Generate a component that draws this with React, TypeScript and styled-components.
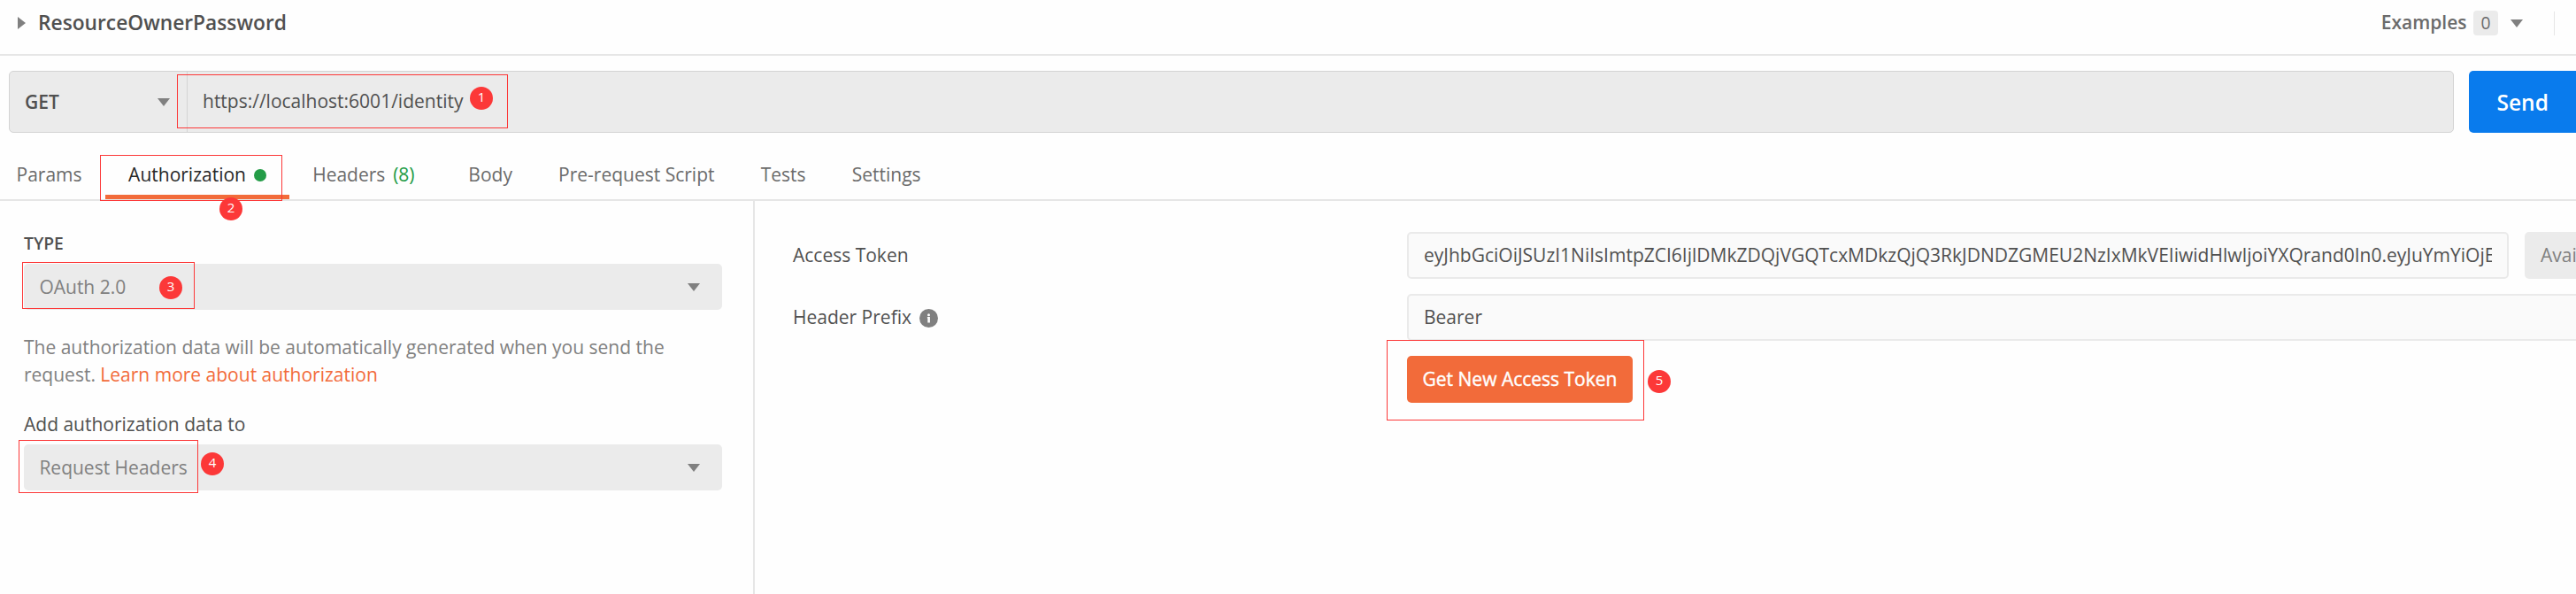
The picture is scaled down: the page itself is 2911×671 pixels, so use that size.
import React from "react";
import styled, { createGlobalStyle, css } from "styled-components";

const color = {
  page: "#fefefe",
  line: "#e6e6e6",
  field: "#ebebeb",
  input: "#fafafa",
  strong: "#505050",
  text: "#6b6b6b",
  muted: "#808080",
  orange: "#f26b3a",
  blue: "#097bed",
  green: "#249c47",
  mark: "#fc3838",
};

const GlobalStyle = createGlobalStyle`
  * { box-sizing: border-box; }
  body {
    margin: 0;
    background: ${color.page};
    font-family: "Open Sans", "Noto Sans", sans-serif;
    font-size: 21px;
    color: ${color.text};
    overflow: hidden;
  }
`;

const Page = styled.div`
  position: relative;
  display: flex;
  flex-direction: column;
  height: 671px;
  overflow: hidden;
`;

const Caret = styled.span<{ $dir?: "right" }>`
  flex: none;
  width: 0;
  height: 0;
  ${({ $dir }) =>
    $dir === "right"
      ? css`
          border-left: 9px solid ${color.muted};
          border-top: 7px solid transparent;
          border-bottom: 7px solid transparent;
        `
      : css`
          border-top: 9px solid ${color.muted};
          border-left: 7px solid transparent;
          border-right: 7px solid transparent;
        `}
`;

const TitleBar = styled.header`
  display: flex;
  align-items: center;
  flex: none;
  height: 63px;
  padding: 0 24px 9px 20px;
  border-bottom: 2px solid ${color.line};
`;

const Title = styled.h1`
  margin: 0 auto 0 14px;
  font-size: 22.75px;
  line-height: 30px;
  font-weight: 600;
  color: ${color.strong};
`;

const Examples = styled.div`
  display: flex;
  align-items: center;
  height: 27px;
  padding-right: 35px;
  border-right: 1px solid ${color.line};
  font-weight: 600;
`;

const ExamplesLabel = styled.span`
  padding-bottom: 2px;
`;

const Count = styled.span`
  width: 28px;
  height: 28px;
  margin: 0 14px 0 7.5px;
  border-radius: 4px;
  background: ${color.field};
  font-size: 19.25px;
  font-weight: 400;
  line-height: 28px;
  text-align: center;
`;

const RequestRow = styled.div`
  display: flex;
  flex: none;
  gap: 17px;
  height: 70px;
  margin: 17px 0 0 10px;
`;

const UrlBar = styled.div`
  display: flex;
  flex: none;
  width: 2763px;
  border: 1px solid #d4d4d4;
  border-radius: 5px;
  background: ${color.field};
  color: ${color.strong};
`;

const Method = styled.div`
  display: flex;
  align-items: center;
  justify-content: space-between;
  width: 201px;
  padding: 0 19px 0 17px;
  border-right: 1px solid #d4d4d4;
  font-weight: 600;
`;

const Url = styled.div`
  padding-left: 17px;
  line-height: 67px;
`;

const SendButton = styled.button`
  flex: none;
  width: 160px;
  padding: 0 0 0 31.5px;
  border: 0;
  border-radius: 5px;
  background: ${color.blue};
  color: #fff;
  font: 600 24.5px "Open Sans", sans-serif;
  text-align: left;
`;

const Tabs = styled.nav`
  display: flex;
  align-items: flex-end;
  flex: none;
  height: 77px;
  border-bottom: 2px solid ${color.line};
`;

const Tab = styled.div<{ $active?: boolean }>`
  display: flex;
  align-items: center;
  height: 56px;
  padding: 0 26.1px;
  color: ${({ $active }) => ($active ? "#282828" : color.text)};
  box-shadow: ${({ $active }) => ($active ? `inset 0 -5px ${color.orange}` : "none")};

  &:first-child {
    padding: 0 26.5px 0 18.5px;
  }
`;

const Dot = styled.span`
  width: 14px;
  height: 14px;
  margin: 2px 0 0 9px;
  border-radius: 50%;
  background: ${color.green};
`;

const HeaderCount = styled.span`
  margin: 0 8.6px 0 8.8px;
  color: ${color.green};
`;

const Panels = styled.main`
  display: flex;
  flex: 1;
`;

const TypePanel = styled.section`
  flex: none;
  width: 853px;
  padding: 32px 35px 0 27px;
  border-right: 2px solid ${color.line};
`;

const FieldLabel = styled.div<{ $caps?: boolean }>`
  margin-bottom: ${({ $caps }) => ($caps ? 8 : 7)}px;
  font-size: ${({ $caps }) => ($caps ? "19.25px" : "21px")};
  font-weight: ${({ $caps }) => ($caps ? 600 : 400)};
  line-height: 31px;
  color: ${color.strong};
`;

const Select = styled.div`
  display: flex;
  align-items: center;
  justify-content: space-between;
  height: 52px;
  padding: 0 25px 0 17.4px;
  border-radius: 5px;
  background: ${color.field};
  color: ${color.muted};
`;

const Hint = styled.p`
  margin: 27px 0 25px;
  line-height: 31px;
  color: ${color.muted};
`;

const HintLink = styled.a`
  color: ${color.orange};
`;

const TokenPanel = styled.section`
  display: flex;
  flex: none;
  flex-direction: column;
  gap: 17px;
  width: 2200px;
  padding: 35px 0 0 43px;
`;

const FormRow = styled.div`
  display: flex;
  height: 53px;
`;

const FormLabel = styled.div`
  display: flex;
  align-items: center;
  flex: none;
  width: 694px;
  padding-bottom: 1px;
  color: ${color.strong};
`;

const InfoIcon = styled.svg`
  margin: 2px 0 0 9px;
`;

const Input = styled.div<{ $width: number }>`
  flex: none;
  width: ${({ $width }) => $width}px;
  padding: 0 17px;
  border: 2px solid #eaeaea;
  border-radius: 5px;
  background: ${color.input};
  color: ${color.strong};
  line-height: 48px;
`;

const InputValue = styled.div`
  overflow: hidden;
  white-space: nowrap;
`;

const TokensMenu = styled.div`
  flex: none;
  width: 240px;
  margin-left: 18px;
  padding-left: 18px;
  border-radius: 5px;
  background: ${color.field};
  color: ${color.muted};
  line-height: 52px;
`;

const TokenButton = styled.button`
  width: 255px;
  padding: 0 0 1px;
  border: 0;
  border-radius: 5px;
  background: ${color.orange};
  color: #fff;
  font: 400 21px "Open Sans", sans-serif;
  -webkit-text-stroke: 0.4px #fff;
`;

type Box = { $x: number; $y: number; $w: number; $h: number };

const Frame = styled.div<Box>`
  position: absolute;
  left: ${({ $x }) => $x}px;
  top: ${({ $y }) => $y}px;
  width: ${({ $w }) => $w}px;
  height: ${({ $h }) => $h}px;
  border: 1px solid ${color.mark};
`;

const Pin = styled.div<{ $x: number; $y: number }>`
  position: absolute;
  left: ${({ $x }) => $x}px;
  top: ${({ $y }) => $y}px;
  width: 26px;
  height: 26px;
  border-radius: 50%;
  background: ${color.mark};
  color: #fff;
  font-size: 15px;
  line-height: 23px;
  text-align: center;
`;

const steps = [
  { frame: [200, 84, 374, 61], pin: [531, 98] },
  { frame: [113, 175, 206, 52], pin: [248, 223] },
  { frame: [25, 296, 195, 53], pin: [180, 312] },
  { frame: [21, 497, 203, 60], pin: [227, 511] },
  { frame: [1567, 384, 291, 91], pin: [1862, 418] },
];

const token =
  "eyJhbGciOiJSUzI1NiIsImtpZCI6IjlDMkZDQjVGQTcxMDkzQjQ3RkJDNDZGMEU2NzIxMkVEIiwidHlwIjoiYXQrand0In0.eyJuYmYiOjE";

export default function App() {
  return (
    <Page>
      <GlobalStyle />
      <TitleBar>
        <Caret $dir="right" />
        <Title>ResourceOwnerPassword</Title>
        <Examples>
          <ExamplesLabel>Examples</ExamplesLabel>
          <Count>0</Count>
          <Caret />
        </Examples>
      </TitleBar>

      <RequestRow>
        <UrlBar>
          <Method>
            GET
            <Caret />
          </Method>
          <Url>https://localhost:6001/identity</Url>
        </UrlBar>
        <SendButton>Send</SendButton>
      </RequestRow>

      <Tabs>
        <Tab>Params</Tab>
        <Tab $active>
          Authorization
          <Dot />
        </Tab>
        <Tab>
          Headers
          <HeaderCount>(8)</HeaderCount>
        </Tab>
        <Tab>Body</Tab>
        <Tab>Pre-request Script</Tab>
        <Tab>Tests</Tab>
        <Tab>Settings</Tab>
      </Tabs>

      <Panels>
        <TypePanel>
          <FieldLabel $caps>TYPE</FieldLabel>
          <Select>
            OAuth 2.0
            <Caret />
          </Select>
          <Hint>
            The authorization data will be automatically generated when you send the
            <br />
            request. <HintLink>Learn more about authorization</HintLink>
          </Hint>
          <FieldLabel>Add authorization data to</FieldLabel>
          <Select>
            Request Headers
            <Caret />
          </Select>
        </TypePanel>

        <TokenPanel>
          <FormRow>
            <FormLabel>Access Token</FormLabel>
            <Input $width={1245}>
              <InputValue>{token}</InputValue>
            </Input>
            <TokensMenu>Available Tokens</TokensMenu>
          </FormRow>
          <FormRow>
            <FormLabel>
              Header Prefix
              <InfoIcon width="21" height="21" viewBox="0 0 21 21">
                <circle cx="10.5" cy="10.5" r="10.5" fill={color.muted} />
                <circle cx="10.5" cy="6.7" r="1.5" fill="#fff" />
                <path d="M8.9 9h3v6.6H9.3v-5.2h-.4z" fill="#fff" />
              </InfoIcon>
            </FormLabel>
            <Input $width={1503}>
              <InputValue>Bearer</InputValue>
            </Input>
          </FormRow>
          <FormRow>
            <FormLabel />
            <TokenButton>Get New Access Token</TokenButton>
          </FormRow>
        </TokenPanel>
      </Panels>

      {steps.map(({ frame, pin }, i) => (
        <React.Fragment key={i}>
          <Frame $x={frame[0]} $y={frame[1]} $w={frame[2]} $h={frame[3]} />
          <Pin $x={pin[0]} $y={pin[1]}>{i + 1}</Pin>
        </React.Fragment>
      ))}
    </Page>
  );
}
